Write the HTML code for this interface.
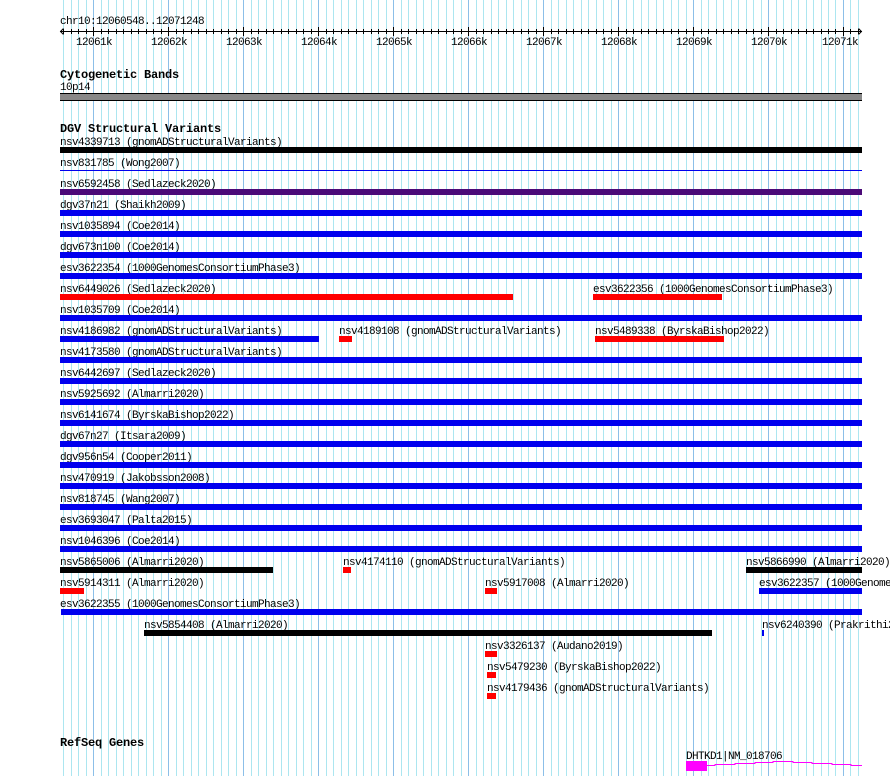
<!DOCTYPE html>
<html><head><meta charset="utf-8"><style>
html,body{margin:0;padding:0;background:#fff;width:890px;height:776px;overflow:hidden}
svg{display:block}
text{font-family:"Liberation Mono",monospace;font-size:11px;letter-spacing:-0.6px;fill:#000}
.b{font-weight:bold;font-size:12px;letter-spacing:-0.2px}
</style></head><body>
<svg width="890" height="776" xmlns="http://www.w3.org/2000/svg" shape-rendering="crispEdges">
<path stroke="#ace6f0" stroke-width="1" fill="none" d="M63.5,0V776M71.5,0V776M78.5,0V776M86.5,0V776M101.5,0V776M108.5,0V776M116.5,0V776M123.5,0V776M131.5,0V776M138.5,0V776M146.5,0V776M153.5,0V776M161.5,0V776M176.5,0V776M183.5,0V776M191.5,0V776M198.5,0V776M206.5,0V776M213.5,0V776M221.5,0V776M228.5,0V776M236.5,0V776M251.5,0V776M258.5,0V776M266.5,0V776M273.5,0V776M281.5,0V776M288.5,0V776M296.5,0V776M303.5,0V776M311.5,0V776M326.5,0V776M333.5,0V776M341.5,0V776M348.5,0V776M356.5,0V776M363.5,0V776M371.5,0V776M378.5,0V776M386.5,0V776M401.5,0V776M408.5,0V776M416.5,0V776M423.5,0V776M431.5,0V776M438.5,0V776M446.5,0V776M453.5,0V776M461.5,0V776M476.5,0V776M483.5,0V776M491.5,0V776M498.5,0V776M506.5,0V776M513.5,0V776M521.5,0V776M528.5,0V776M536.5,0V776M551.5,0V776M558.5,0V776M566.5,0V776M573.5,0V776M581.5,0V776M588.5,0V776M596.5,0V776M603.5,0V776M611.5,0V776M626.5,0V776M633.5,0V776M641.5,0V776M648.5,0V776M656.5,0V776M663.5,0V776M671.5,0V776M678.5,0V776M686.5,0V776M701.5,0V776M708.5,0V776M716.5,0V776M723.5,0V776M731.5,0V776M738.5,0V776M746.5,0V776M753.5,0V776M761.5,0V776M776.5,0V776M783.5,0V776M791.5,0V776M798.5,0V776M806.5,0V776M813.5,0V776M821.5,0V776M828.5,0V776M835.5,0V776M850.5,0V776M858.5,0V776"/>
<path stroke="#8cbfe8" stroke-width="1" fill="none" d="M93.5,0V776M168.5,0V776M243.5,0V776M318.5,0V776M393.5,0V776M468.5,0V776M543.5,0V776M618.5,0V776M693.5,0V776M768.5,0V776M843.5,0V776"/>
<!-- ruler -->
<text x="60" y="24">chr10:12060548..12071248</text>
<rect x="60" y="31" width="802" height="1" fill="#000"/>
<path d="M63.5,28.5 L60.5,31.5 L63.5,34.5 M858.5,28.5 L861.5,31.5 L858.5,34.5" stroke="#000" fill="none" shape-rendering="auto"/>
<path stroke="#000" fill="none" d="M63.5,29V34M71.5,29V34M78.5,29V34M86.5,29V34M101.5,29V34M108.5,29V34M116.5,29V34M123.5,29V34M131.5,29V34M138.5,29V34M146.5,29V34M153.5,29V34M161.5,29V34M176.5,29V34M183.5,29V34M191.5,29V34M198.5,29V34M206.5,29V34M213.5,29V34M221.5,29V34M228.5,29V34M236.5,29V34M251.5,29V34M258.5,29V34M266.5,29V34M273.5,29V34M281.5,29V34M288.5,29V34M296.5,29V34M303.5,29V34M311.5,29V34M326.5,29V34M333.5,29V34M341.5,29V34M348.5,29V34M356.5,29V34M363.5,29V34M371.5,29V34M378.5,29V34M386.5,29V34M401.5,29V34M408.5,29V34M416.5,29V34M423.5,29V34M431.5,29V34M438.5,29V34M446.5,29V34M453.5,29V34M461.5,29V34M476.5,29V34M483.5,29V34M491.5,29V34M498.5,29V34M506.5,29V34M513.5,29V34M521.5,29V34M528.5,29V34M536.5,29V34M551.5,29V34M558.5,29V34M566.5,29V34M573.5,29V34M581.5,29V34M588.5,29V34M596.5,29V34M603.5,29V34M611.5,29V34M626.5,29V34M633.5,29V34M641.5,29V34M648.5,29V34M656.5,29V34M663.5,29V34M671.5,29V34M678.5,29V34M686.5,29V34M701.5,29V34M708.5,29V34M716.5,29V34M723.5,29V34M731.5,29V34M738.5,29V34M746.5,29V34M753.5,29V34M761.5,29V34M776.5,29V34M783.5,29V34M791.5,29V34M798.5,29V34M806.5,29V34M813.5,29V34M821.5,29V34M828.5,29V34M835.5,29V34M850.5,29V34M858.5,29V34M93.5,27V36M168.5,27V36M243.5,27V36M318.5,27V36M393.5,27V36M468.5,27V36M543.5,27V36M618.5,27V36M693.5,27V36M768.5,27V36M843.5,27V36"/>
<g text-anchor="middle">
<text x="94" y="45">12061k</text><text x="169" y="45">12062k</text><text x="244" y="45">12063k</text><text x="319" y="45">12064k</text><text x="394" y="45">12065k</text><text x="469" y="45">12066k</text><text x="544" y="45">12067k</text><text x="619" y="45">12068k</text><text x="694" y="45">12069k</text><text x="769" y="45">12070k</text><text x="840" y="45">12071k</text>
</g>
<!-- cyto -->
<text class="b" x="60" y="78">Cytogenetic Bands</text>
<text x="60" y="90">10p14</text>
<rect x="60" y="93" width="802" height="8" fill="#000"/>
<rect x="60" y="94" width="802" height="6" fill="#888"/>
<!-- DGV -->
<text class="b" x="60" y="132">DGV Structural Variants</text>
<text x="60" y="145">nsv4339713 (gnomADStructuralVariants)</text><rect x="60" y="147" width="802" height="6" fill="#000"/>
<text x="60" y="166">nsv831785 (Wong2007)</text><rect x="60" y="170" width="802" height="1" fill="#0000ee"/>
<text x="60" y="187">nsv6592458 (Sedlazeck2020)</text><rect x="60" y="189" width="802" height="6" fill="#4b0a78"/>
<text x="60" y="208">dgv37n21 (Shaikh2009)</text><rect x="60" y="210" width="802" height="6" fill="#0000ee"/>
<text x="60" y="229">nsv1035894 (Coe2014)</text><rect x="60" y="231" width="802" height="6" fill="#0000ee"/>
<text x="60" y="250">dgv673n100 (Coe2014)</text><rect x="60" y="252" width="802" height="6" fill="#0000ee"/>
<text x="60" y="271">esv3622354 (1000GenomesConsortiumPhase3)</text><rect x="60" y="273" width="802" height="6" fill="#0000ee"/>
<text x="60" y="292">nsv6449026 (Sedlazeck2020)</text><rect x="60" y="294" width="453" height="6" fill="#f00"/>
<text x="593" y="292">esv3622356 (1000GenomesConsortiumPhase3)</text><rect x="593" y="294" width="129" height="6" fill="#f00"/>
<text x="60" y="313">nsv1035709 (Coe2014)</text><rect x="60" y="315" width="802" height="6" fill="#0000ee"/>
<text x="60" y="334">nsv4186982 (gnomADStructuralVariants)</text><rect x="60" y="336" width="259" height="6" fill="#0000ee"/>
<text x="339" y="334">nsv4189108 (gnomADStructuralVariants)</text><rect x="339" y="336" width="13" height="6" fill="#f00"/>
<text x="595" y="334">nsv5489338 (ByrskaBishop2022)</text><rect x="595" y="336" width="129" height="6" fill="#f00"/>
<text x="60" y="355">nsv4173580 (gnomADStructuralVariants)</text><rect x="60" y="357" width="802" height="6" fill="#0000ee"/>
<text x="60" y="376">nsv6442697 (Sedlazeck2020)</text><rect x="60" y="378" width="802" height="6" fill="#0000ee"/>
<text x="60" y="397">nsv5925692 (Almarri2020)</text><rect x="60" y="399" width="802" height="6" fill="#0000ee"/>
<text x="60" y="418">nsv6141674 (ByrskaBishop2022)</text><rect x="60" y="420" width="802" height="6" fill="#0000ee"/>
<text x="60" y="439">dgv67n27 (Itsara2009)</text><rect x="60" y="441" width="802" height="6" fill="#0000ee"/>
<text x="60" y="460">dgv956n54 (Cooper2011)</text><rect x="60" y="462" width="802" height="6" fill="#0000ee"/>
<text x="60" y="481">nsv470919 (Jakobsson2008)</text><rect x="60" y="483" width="802" height="6" fill="#0000ee"/>
<text x="60" y="502">nsv818745 (Wang2007)</text><rect x="60" y="504" width="802" height="6" fill="#0000ee"/>
<text x="60" y="523">esv3693047 (Palta2015)</text><rect x="60" y="525" width="802" height="6" fill="#0000ee"/>
<text x="60" y="544">nsv1046396 (Coe2014)</text><rect x="60" y="546" width="802" height="6" fill="#0000ee"/>
<text x="60" y="565">nsv5865006 (Almarri2020)</text><rect x="60" y="567" width="213" height="6" fill="#000"/>
<text x="343" y="565">nsv4174110 (gnomADStructuralVariants)</text><rect x="343" y="567" width="8" height="6" fill="#f00"/>
<text x="746" y="565">nsv5866990 (Almarri2020)</text><rect x="746" y="567" width="116" height="6" fill="#000"/>
<text x="60" y="586">nsv5914311 (Almarri2020)</text><rect x="60" y="588" width="24" height="6" fill="#f00"/>
<text x="485" y="586">nsv5917008 (Almarri2020)</text><rect x="485" y="588" width="12" height="6" fill="#f00"/>
<text x="759" y="586">esv3622357 (1000GenomesConsortiumPhase3)</text><rect x="759" y="588" width="103" height="6" fill="#0000ee"/>
<text x="60" y="607">esv3622355 (1000GenomesConsortiumPhase3)</text><rect x="61" y="609" width="801" height="6" fill="#0000ee"/>
<text x="144" y="628">nsv5854408 (Almarri2020)</text><rect x="144" y="630" width="568" height="6" fill="#000"/>
<text x="762" y="628">nsv6240390 (Prakrithi2020)</text><rect x="762" y="630" width="2" height="6" fill="#0000ee"/>
<text x="485" y="649">nsv3326137 (Audano2019)</text><rect x="485" y="651" width="12" height="6" fill="#f00"/>
<text x="487" y="670">nsv5479230 (ByrskaBishop2022)</text><rect x="487" y="672" width="9" height="6" fill="#f00"/>
<text x="487" y="691">nsv4179436 (gnomADStructuralVariants)</text><rect x="487" y="693" width="9" height="6" fill="#f00"/>
<!-- RefSeq -->
<text class="b" x="60" y="746">RefSeq Genes</text>
<text x="686" y="759">DHTKD1|NM_018706</text>
<rect x="686" y="761" width="21" height="10" fill="#f0f"/>
<path d="M707,765.5 H715 V764.5 H735 V763.5 H755 V762.5 H773 V761.5 H793 V762.5 H812 V763.5 H832 V764.5 H851 V765.5 H862" stroke="#f0f" fill="none"/>
</svg>
</body></html>
